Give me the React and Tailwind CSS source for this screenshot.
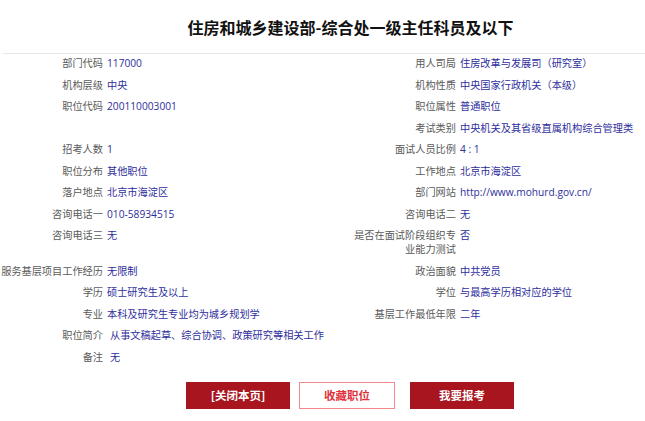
import React from 'react';

const rows = [
  { l: ['部门代码', '117000'], r: ['用人司局', '住房改革与发展司（研究室）'] },
  { l: ['机构层级', '中央'], r: ['机构性质', '中央国家行政机关（本级）'] },
  { l: ['职位代码', '200110003001'], r: ['职位属性', '普通职位'] },
  { l: null, r: ['考试类别', '中央机关及其省级直属机构综合管理类'] },
  { l: ['招考人数', '1'], r: ['面试人员比例', '4 : 1'] },
  { l: ['职位分布', '其他职位'], r: ['工作地点', '北京市海淀区'] },
  { l: ['落户地点', '北京市海淀区'], r: ['部门网站', 'http://www.mohurd.gov.cn/'] },
  { l: ['咨询电话一', '010-58934515'], r: ['咨询电话二', '无'] },
  { l: ['咨询电话三', '无'], r: ['是否在面试阶段组织专业能力测试', '否'] },
  { l: ['服务基层项目工作经历', '无限制'], r: ['政治面貌', '中共党员'] },
  { l: ['学历', '硕士研究生及以上'], r: ['学位', '与最高学历相对应的学位'] },
  { l: ['专业', '本科及研究生专业均为城乡规划学'], r: ['基层工作最低年限', '二年'] },
];

const fullRows = [
  ['职位简介', '从事文稿起草、综合协调、政策研究等相关工作'],
  ['备注', '无'],
];

function Label({ children }) {
  return <div className="w-[107px] shrink-0 pr-[4px] text-right text-[#5a5a5a]">{children}</div>;
}

export default function App() {
  return (
    <div
      className="w-[645px] h-[421px] bg-white overflow-hidden"
      style={{ fontFamily: '"Open Sans", "Noto Sans CJK SC", sans-serif' }}
    >
      {/* Header */}
      <div className="ml-[3px] h-[54px] border-b border-[#e8e8e8] flex items-center justify-center pl-[53px]">
        <h1
          className="text-[16px] font-bold text-[#111]"
          style={{ fontFamily: '"Noto Sans CJK SC", sans-serif' }}
        >
          住房和城乡建设部-综合处一级主任科员及以下
        </h1>
      </div>

      {/* Details */}
      <div className="text-[10.2px] leading-[14px]">
        {rows.map((row, i) => (
          <div key={i} className="flex pt-[2px] pb-[5.5px]">
            <Label>{row.l ? row.l[0] : ''}</Label>
            <div className="w-[246px] shrink-0 text-[#2e2e9c]">{row.l ? row.l[1] : ''}</div>
            <Label>{row.r[0]}</Label>
            <div className="flex-1 text-[#2e2e9c]">{row.r[1]}</div>
          </div>
        ))}
        {fullRows.map(([k, v]) => (
          <div key={k} className="flex pt-[2px] pb-[5.5px]">
            <Label>{k}</Label>
            <div className="flex-1 pl-[3px] text-[#2e2e9c]">{v}</div>
          </div>
        ))}
      </div>

      {/* Buttons */}
      <div
        className="flex mt-[13px] pl-[186px] text-[11.5px] font-bold"
        style={{ fontFamily: '"Noto Sans CJK SC", sans-serif' }}
      >
        <button className="w-[104px] h-[27px] bg-[#a8151e] text-white">[关闭本页]</button>
        <button className="ml-[9px] w-[96px] h-[27px] bg-white border border-[#f08a8f] text-[#e0323c]">收藏职位</button>
        <button className="ml-[15px] w-[104px] h-[27px] bg-[#a8151e] text-white">我要报考</button>
      </div>
    </div>
  );
}
